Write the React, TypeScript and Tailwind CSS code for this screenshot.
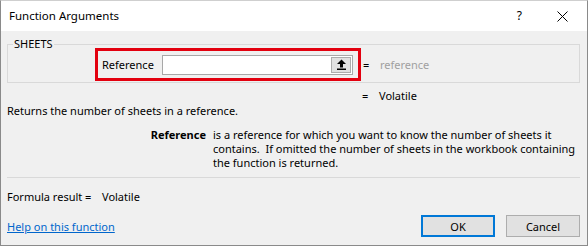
export default function App() {
  return (
    <div className="w-[588px] h-[246px] flex flex-col border border-[#8a8a8a] border-t-[#cfcfcf] text-[11px] text-black font-['Noto_Sans',sans-serif] overflow-hidden whitespace-nowrap">
      <div className="h-[30px] bg-white flex items-center pl-[8px] pr-[19px] shrink-0">
        <span className="leading-[16px] text-[11.5px]">Function Arguments</span>
        <span className="ml-auto text-[12px] leading-[16px] mr-[35px]">?</span>
        <svg width="11" height="11" viewBox="0 0 11 11" className="mt-[1px]">
          <path d="M0.5 0.5 L10.5 10.5 M10.5 0.5 L0.5 10.5" stroke="#000" strokeWidth="1" fill="none" />
        </svg>
      </div>
      <div className="flex-1 bg-[#f0f0f0] flex flex-col pl-[6px] pr-[7px]">
        <div className="mt-[13px] h-[39px] border border-[#d9d9d9] relative shrink-0">
          <span className="absolute left-[5px] -top-[8px] px-[1px] bg-[#f0f0f0] leading-[14px]">SHEETS</span>
          <div className="flex items-center mt-[3px] ml-[87px]">
            <div className="w-[266px] h-[33px] border-[3px] border-[#e3000f] flex items-center pl-[4px] shrink-0">
              <span className="leading-[15px]">Reference</span>
              <div className="ml-auto mr-[5px] w-[191px] h-[20px] bg-white border border-[#a8a8a8] flex items-center justify-end pr-[1px]">
                <div className="w-[20px] h-[16px] bg-[#e1e1e1] border border-[#adadad] flex items-center justify-center">
                  <svg width="9" height="11" viewBox="0 0 9 11">
                    <polygon points="0,5 4.5,0.5 9,5" fill="#000" />
                    <rect x="3" y="4.5" width="3" height="4" fill="#000" />
                    <rect x="0" y="9.5" width="9" height="1.5" fill="#000" />
                  </svg>
                </div>
              </div>
            </div>
            <span className="ml-[2px] w-[17px] leading-[15px] shrink-0">=</span>
            <span className="leading-[15px] text-[#a0a0a0]">reference</span>
          </div>
        </div>
        <div className="mt-[5px] pl-[355px] flex leading-[15px]">
          <span className="w-[17px] shrink-0">=</span>
          <span>Volatile</span>
        </div>
        <div className="leading-[15px]">Returns the number of sheets in a reference.</div>
        <div className="mt-[10px] flex leading-[14px]">
          <div className="w-[199px] text-right font-bold shrink-0">Reference</div>
          <div className="pl-[7px] shrink-0">
            <div>is a reference for which you want to know the number of sheets it</div>
            <div>contains.&nbsp; If omitted the number of sheets in the workbook containing</div>
            <div>the function is returned.</div>
          </div>
        </div>
        <div className="mt-[7px] border-t border-[#d9d9d9]" />
        <div className="mt-[11px] flex leading-[15px]">
          <span className="w-[95px] shrink-0">Formula result =</span>
          <span>Volatile</span>
        </div>
        <div className="mt-[11px] flex items-center">
          <span className="text-[#0066cc] underline leading-[15px]">Help on this function</span>
          <div className="ml-auto flex gap-[11px]">
            <button className="w-[74px] h-[22px] bg-[#e1e1e1] border-2 border-[#0078d7] leading-[15px]">OK</button>
            <button className="w-[74px] h-[22px] bg-[#e1e1e1] border border-[#adadad] leading-[15px]">Cancel</button>
          </div>
        </div>
      </div>
    </div>
  );
}
